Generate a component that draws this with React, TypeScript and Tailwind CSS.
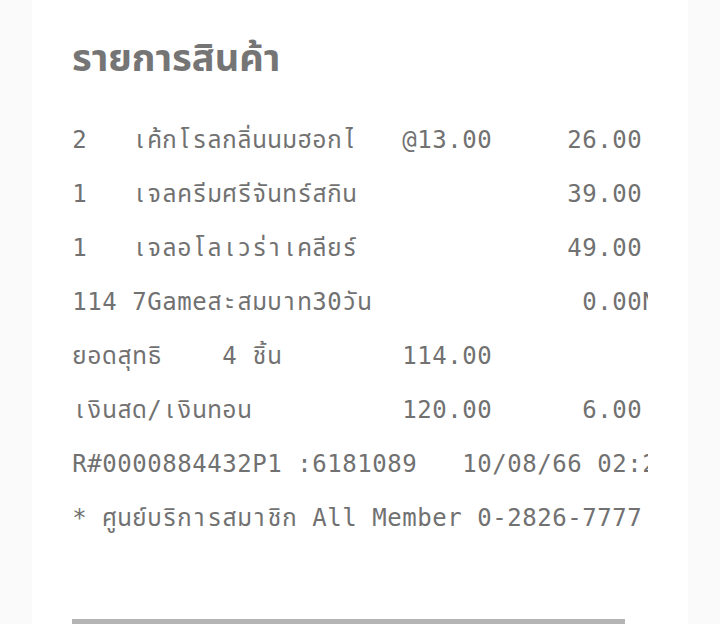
import type { ReactElement } from 'react'

const lines = [
	'2   เค้กโรลกลิ่นนมฮอกไ   @13.00     26.00',
	'1   เจลครีมศรีจันทร์สกิน              39.00',
	'1   เจลอโลเวร่าเคลียร์              49.00',
	'114 7Gameสะสมบาท30วัน              0.00N',
	'ยอดสุทธิ    4 ชิ้น        114.00',
	'เงินสด/เงินทอน          120.00      6.00',
	'R#0000884432P1 :6181089   10/08/66 02:20',
	'* ศูนย์บริการสมาชิก All Member 0-2826-7777',
]

// one cell per printed column: a base char plus any Thai marks above/below it
function cells(text: string): string[] {
	return text.match(/.[\u0E31\u0E34-\u0E3A\u0E47-\u0E4E]*/gu) ?? []
}

function ReceiptLine({ text }: { text: string }): ReactElement {
	return (
		<div className="flex h-[54px] items-center whitespace-pre">
			{cells(text).map((c, i) => (
				<span key={i} className="w-[15px] shrink-0 text-center">
					{c}
				</span>
			))}
		</div>
	)
}

export default function App(): ReactElement {
	return (
		<div className="min-h-screen bg-[#fafafa] flex justify-center">
			<div className="w-[656px] bg-white px-10 pt-[30px]">
				<h1 className="text-[38px] leading-[52px] font-bold text-[#757575] font-['Noto_Sans','Noto_Sans_Thai',sans-serif]">
					รายการสินค้า
				</h1>
				<div className="mt-[31px] overflow-hidden text-[24px] text-[#717171] font-['DejaVu_Sans_Mono','Noto_Sans_Thai',monospace]">
					{lines.map((l, i) => (
						<ReceiptLine key={i} text={l} />
					))}
				</div>
				<div className="mt-[74px] h-[6px] w-[553px] bg-[#b4b4b4]" />
			</div>
		</div>
	)
}
